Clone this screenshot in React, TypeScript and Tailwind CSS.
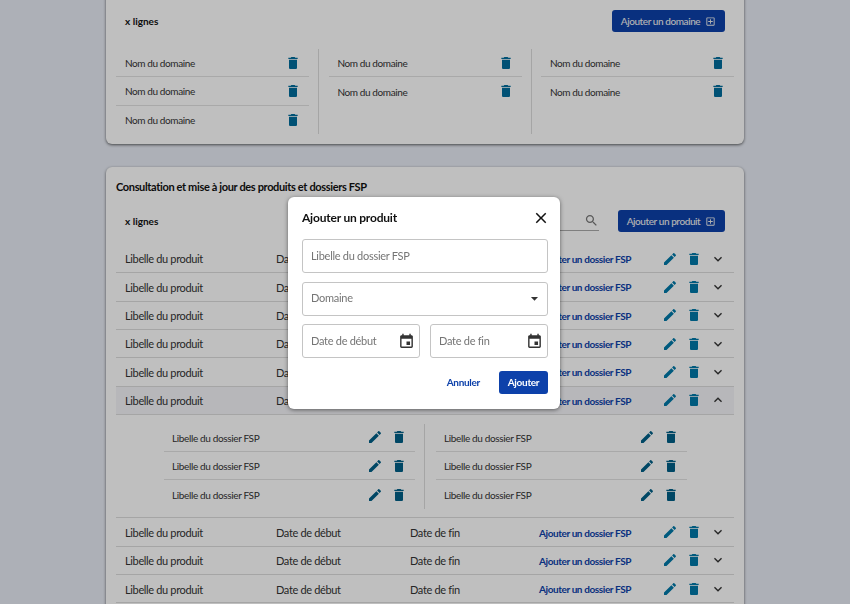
const TRASH = "M6 19c0 1.1.9 2 2 2h8c1.1 0 2-.9 2-2V7H6v12zM19 4h-3.5l-1-1h-5l-1 1H5v2h14V4z";
const EDIT = "M3 17.25V21h3.75L17.81 9.94l-3.75-3.75L3 17.25zM20.71 7.04c.39-.39.39-1.02 0-1.41l-2.34-2.34c-.39-.39-1.02-.39-1.41 0l-1.83 1.83 3.75 3.75 1.83-1.83z";
const DOWN = "M16.59 8.59 12 13.17 7.41 8.59 6 10l6 6 6-6z";
const UP = "M12 8l-6 6 1.41 1.41L12 10.83l4.59 4.58L18 14z";
const EVENT = "M17 12h-5v5h5v-5zM16 1v2H8V1H6v2H5c-1.11 0-1.99.9-1.99 2L3 19c0 1.1.89 2 2 2h14c1.1 0 2-.9 2-2V5c0-1.1-.9-2-2-2h-1V1h-2zm3 18H5V8h14v11z";
const ADD_BOX = "M19 3H5c-1.1 0-2 .9-2 2v14c0 1.1.9 2 2 2h14c1.1 0 2-.9 2-2V5c0-1.1-.9-2-2-2zm0 16H5V5h14v14zM11 17h2v-4h4v-2h-4V7h-2v4H7v2h4z";
const CLOSE = "M19 6.41 17.59 5 12 10.59 6.41 5 5 6.41 10.59 12 5 17.59 6.41 19 12 13.41 17.59 19 19 17.59 13.41 12z";
const SEARCH = "M15.5 14h-.79l-.28-.27C15.41 12.59 16 11.11 16 9.5 16 5.91 13.09 3 9.5 3S3 5.91 3 9.5 5.91 16 9.5 16c1.61 0 3.09-.59 4.23-1.57l.27.28v.79l5 4.99L20.49 19l-4.99-5zm-6 0C7.01 14 5 11.99 5 9.5S7.01 5 9.5 5 14 7.01 14 9.5 11.99 14 9.5 14z";

function Icon({ d, className }: { d: string; className: string }) {
  return (
    <svg viewBox="0 0 24 24" className={className} fill="currentColor">
      <path d={d} />
    </svg>
  );
}

function AddButton({ label, className }: { label: string; className: string }) {
  return (
    <button className={`flex h-[22px] items-center justify-center gap-[5px] rounded-[3px] bg-[#0d41aa] text-[10px] font-medium tracking-[-0.42px] text-[#f0f0f0] ${className}`}>
      {label}
      <Icon d={ADD_BOX} className="h-[11px] w-[11px]" />
    </button>
  );
}

function DomainColumn({ count }: { count: number }) {
  return (
    <div className="w-[193px]">
      {Array.from({ length: count }).map((_, i) => (
        <div key={i} className={`flex h-[28.33px] items-center justify-between pl-[9px] pr-[8px] ${i < count - 1 ? "border-b border-[#e2e2e2]" : ""}`}>
          <span className="pt-[2px] text-[10px] tracking-[-0.4px] text-[#333]">Nom du domaine</span>
          <Icon d={TRASH} className="h-[16px] w-[16px] text-[#006d9c]" />
        </div>
      ))}
    </div>
  );
}

function ProductRow({ open }: { open?: boolean }) {
  return (
    <div className={`flex h-[28.33px] items-center border-b border-[#dcdcdc] pl-[9px] text-[11px] tracking-[-0.35px] text-[#333] ${open ? "bg-[#f4f5f9]" : ""}`}>
      <span className="w-[151px] pt-[2px]">Libelle du produit</span>
      <span className="w-[134px] pt-[2px]">Date de début</span>
      <span className="w-[129px] pt-[2px]">Date de fin</span>
      <span className="w-[123px] pt-[2px] text-[10px] font-bold tracking-[-0.4px] text-[#0d41aa]">Ajouter un dossier FSP</span>
      <Icon d={EDIT} className="h-[16px] w-[16px] text-[#0079a8]" />
      <Icon d={TRASH} className="ml-[8px] h-[16px] w-[16px] text-[#0079a8]" />
      <Icon d={open ? UP : DOWN} className="ml-[8px] h-[16px] w-[16px] text-[#333]" />
    </div>
  );
}

function FolderColumn() {
  return (
    <div className="w-[251px]">
      {[0, 1, 2].map((i) => (
        <div key={i} className={`flex h-[28.33px] items-center pl-[8px] ${i < 2 ? "border-b border-[#e2e2e2]" : ""}`}>
          <span className="w-[195px] pt-[2px] text-[10px] tracking-[-0.36px] text-[#333]">Libelle du dossier FSP</span>
          <Icon d={EDIT} className="h-[16px] w-[16px] text-[#005f87]" />
          <Icon d={TRASH} className="ml-[8px] h-[16px] w-[16px] text-[#005f87]" />
        </div>
      ))}
    </div>
  );
}

function Field({ label, icon, className }: { label: string; icon?: string; className: string }) {
  return (
    <div className={`flex h-[34px] items-center justify-between rounded-[3px] border border-[#c4c4c4] pl-[8px] pr-[4px] text-[11px] tracking-[-0.28px] text-[#757575] ${className}`}>
      {label}
      {icon ? <Icon d={icon} className="h-[17px] w-[17px] text-[#333]" /> : null}
    </div>
  );
}

export default function App() {
  return (
    <div className="relative h-[604px] w-[850px] overflow-hidden bg-[#e7ebf4] font-['Lato',sans-serif]">
      <div className="mx-auto -mt-[40px] w-[638px]">
        <div className="h-[184px] rounded-[6px] bg-white px-[10px] pt-[50px] shadow-[0_1px_3px_rgba(0,0,0,0.6)]">
          <div className="flex h-[22px] items-center justify-between px-[9px]">
            <span className="text-[10px] font-bold text-[#111]">x lignes</span>
            <AddButton label="Ajouter un domaine" className="w-[113px]" />
          </div>
          <div className="mt-[17px] flex h-[85px] justify-between">
            <DomainColumn count={3} />
            <div className="border-r border-[#dcdcdc]" />
            <DomainColumn count={2} />
            <div className="border-r border-[#dcdcdc]" />
            <DomainColumn count={2} />
          </div>
        </div>

        <div className="mt-[23px] h-[460px] rounded-[6px] bg-white px-[10px] shadow-[0_1px_3px_rgba(0,0,0,0.6)]">
          <h2 className="pt-[12px] text-[11px] leading-[15px] font-bold tracking-[-0.35px] text-[#111]">Consultation et mise à jour des produits et dossiers FSP</h2>
          <div className="mt-[16px] flex h-[22px] items-center justify-between px-[9px]">
            <span className="text-[10px] font-bold text-[#111]">x lignes</span>
            <div className="flex items-center gap-[19px]">
              <div className="flex h-[20px] w-[120px] items-center justify-end border-b border-[#aaa]">
                <Icon d={SEARCH} className="h-[15px] w-[15px] text-[#777]" />
              </div>
              <AddButton label="Ajouter un produit" className="w-[107px]" />
            </div>
          </div>
          <div className="mt-[13px]">
            {[0, 1, 2, 3, 4].map((i) => <ProductRow key={i} />)}
            <ProductRow open />
            <div className="flex h-[103.5px] items-center border-b border-[#dcdcdc] pl-[48px]">
              <FolderColumn />
              <div className="ml-[9px] mr-[11px] h-[85px] border-r border-[#dcdcdc]" />
              <FolderColumn />
            </div>
            {[0, 1, 2].map((i) => <ProductRow key={i} />)}
          </div>
        </div>
      </div>

      <div className="fixed inset-0 bg-black/25" />
      <div className="absolute left-[288px] top-[197px] h-[212px] w-[272px] rounded-[6px] bg-white pl-[14px] pr-[12px] shadow-[0_1px_4px_rgba(0,0,0,0.5)]">
        <div className="flex h-[42px] items-center justify-between">
          <span className="text-[12px] font-bold tracking-[-0.2px] text-[#111]">Ajouter un produit</span>
          <Icon d={CLOSE} className="-mr-[2px] h-[18px] w-[18px] text-[#111]" />
        </div>
        <div className="flex flex-col gap-[8.5px]">
          <Field label="Libelle du dossier FSP" className="w-full" />
          <Field label="Domaine" icon="M7 10l5 5 5-5z" className="w-full" />
          <div className="flex justify-between">
            <Field label="Date de début" icon={EVENT} className="w-[118px]" />
            <Field label="Date de fin" icon={EVENT} className="w-[118px]" />
          </div>
        </div>
        <div className="mt-[13px] flex items-center justify-end gap-[19px]">
          <span className="text-[10px] font-bold tracking-[-0.3px] text-[#0d41aa]">Annuler</span>
          <button className="h-[23px] w-[49px] rounded-[3px] bg-[#0d41aa] text-[10px] font-bold tracking-[-0.3px] text-white">Ajouter</button>
        </div>
      </div>
    </div>
  );
}
